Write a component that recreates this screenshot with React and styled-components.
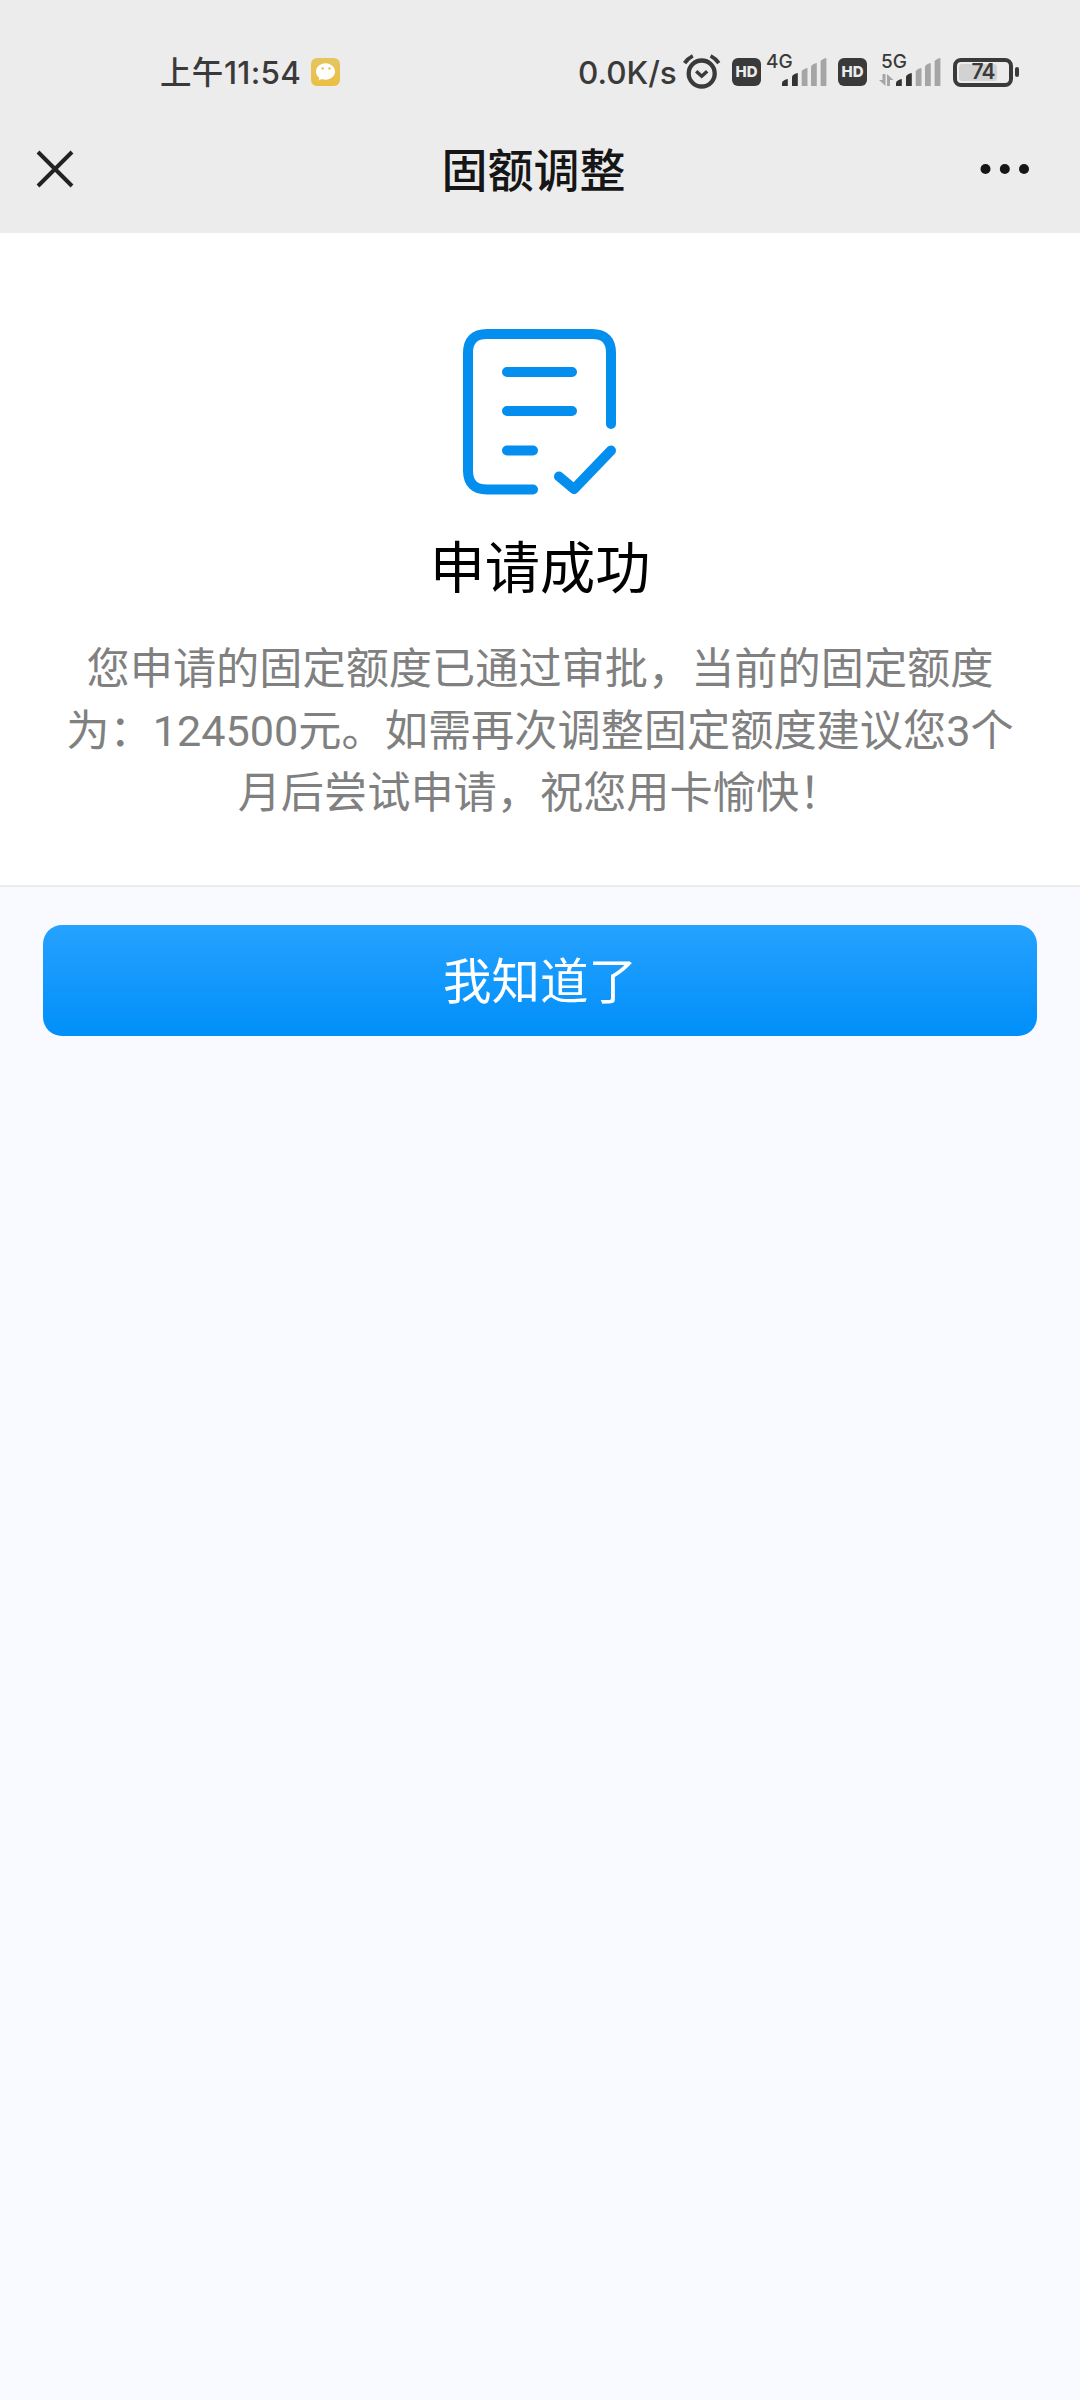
import React from 'react'
import styled, { createGlobalStyle } from 'styled-components'

const App = () => {
    return (
        <Page>
            <GlobalStyle />
            <StatusBar>
                <Time><span>上午</span>11:54</Time>
                <ChatIcon />
                <StatusIcons>
                    <Speed>0.0K/s</Speed>
                    <AlarmIcon />
                    <HdBadge>HD</HdBadge>
                    <Signal label="4G" />
                    <HdBadge>HD</HdBadge>
                    <Signal label="5G" wide />
                    <Battery>
                        <BatteryBody>
                            <BatteryLevel style={{ width: `${(74 / 100) * 52}px` }} />
                            <BatteryText>74</BatteryText>
                        </BatteryBody>
                        <BatteryTip />
                    </Battery>
                </StatusIcons>
            </StatusBar>
            <NavBar>
                <NavButton aria-label="关闭">
                    <svg width="40" height="40" viewBox="0 0 40 40">
                        <path d="M3 3L37 37M37 3L3 37" stroke="#222" strokeWidth="4" />
                    </svg>
                </NavButton>
                <NavTitle>固额调整</NavTitle>
                <NavButton aria-label="更多">
                    <svg width="50" height="12" viewBox="0 0 50 12">
                        <circle cx="5.5" cy="6" r="5" fill="#161616" />
                        <circle cx="24.8" cy="6" r="5" fill="#161616" />
                        <circle cx="44" cy="6" r="5" fill="#161616" />
                    </svg>
                </NavButton>
            </NavBar>
            <Result>
                <ResultIcon />
                <ResultTitle>申请成功</ResultTitle>
                <Description>
                    您申请的固定额度已通过审批，当前的固定额度
                    <br />
                    为：124500元。如需再次调整固定额度建议您3个
                    <br />
                    月后尝试申请，祝您用卡愉快！
                </Description>
            </Result>
            <Footer>
                <ConfirmButton>我知道了</ConfirmButton>
            </Footer>
        </Page>
    )
}
export default App

const ChatIcon = () => (
    <svg width="30" height="30" viewBox="0 0 30 30">
        <defs>
            <linearGradient id="chat" x1="0" y1="0" x2="0" y2="1">
                <stop offset="0" stopColor="#e6c560" />
                <stop offset="1" stopColor="#ebbf45" />
            </linearGradient>
        </defs>
        <rect x="0" y="1" width="29" height="28" rx="6" fill="url(#chat)" />
        <path d="M14.500 6.200c-5.400 0-9.500 3.700-9.500 8.400 0 2.700 1.300 4.800 3.300 6.300l-.6 2.500 3-1.300c1.200.4 2.500.6 3.800.6 5.300 0 9.500-3.600 9.500-8.100 0-4.700-4.200-8.400-9.500-8.400z" fill="#fff" />
        <circle cx="11.700" cy="11.400" r="1.200" fill="#e0bd58" />
        <circle cx="18.500" cy="11.400" r="1.200" fill="#e0bd58" />
    </svg>
)

const AlarmIcon = () => (
    <AlarmSvg width="38" height="36" viewBox="0 0 38 36" fill="none" stroke="#3a3a3a">
        <circle cx="18.700" cy="19.500" r="13" strokeWidth="4.300" />
        <path d="M13.200 17.200l5.500 5 5.500-5" strokeWidth="3.500" />
        <path d="M1.600 9.200Q5 4.300 9.800 1.900M27.600 1.900Q32.400 4.300 35.800 9.200" strokeWidth="3.800" />
    </AlarmSvg>
)

const bars = [
    { x: 0, top: 21, color: '#333' },
    { x: 10, top: 15, color: '#333' },
    { x: 19.7, top: 10, color: '#a5a5a5' },
    { x: 29, top: 5, color: '#a5a5a5' },
    { x: 38.6, top: 0, color: '#a5a5a5' },
]

const Signal = ({ label, wide }) => (
    <SignalBox $wide={wide}>
        <SignalLabel $wide={wide}>{label}</SignalLabel>
        {wide && (
            <svg width="15" height="12" viewBox="0 0 15 12" fill="#a5a5a5">
                <path d="M3.500 0h3v12L0 6h3.500zM8 12V0l6.500 6H11v6z" />
            </svg>
        )}
        <svg width="45" height="28" viewBox="0 0 45 28">
            {bars.map(({ x, top, color }) => (
                <path key={x} d={`M${x} 28V${top + 3.5}Q${x + 1.5} ${top + 0.5} ${x + 5.8} ${top}V28z`} fill={color} />
            ))}
        </svg>
    </SignalBox>
)

const ResultIcon = () => (
    <svg width="160" height="176" viewBox="0 0 160 176" fill="none" stroke="#048fee" strokeWidth="10" strokeLinecap="round" strokeLinejoin="round">
        <path d="M151 99V28Q151 9 132 9H27Q8 9 8 28V145.500Q8 164.500 27 164.500H73" />
        <path d="M47 47H112M47 86H112M47 125.500H73" />
        <path d="M99 151.500L114 164L151 125.500" />
    </svg>
)

const GlobalStyle = createGlobalStyle`
    body {
        margin: 0;
        background: #f9faff;
    }
    * {
        box-sizing: border-box;
    }
    svg {
        display: block;
        flex: none;
    }
`;

const Page = styled.div`
    width: 1080px;
    min-height: 2400px;
    background: #f9faff;
    font-family: Roboto, "Noto Sans CJK SC", sans-serif;
`;

const StatusBar = styled.header`
    display: flex;
    align-items: center;
    height: 104px;
    padding: 40px 61px 0 160px;
    background: #ececec;
    color: #3a3a3a;
    font-family: Inter, "Noto Sans CJK SC", sans-serif;
`;

const Time = styled.div`
    display: flex;
    align-items: center;
    width: 151px;
    padding-top: 2px;
    font-size: 31.5px;
    line-height: 40px;
    font-weight: 500;
    letter-spacing: 0.3px;
    white-space: nowrap;

    span {
        width: 64px;
    }
`;

const StatusIcons = styled.div`
    display: flex;
    align-items: center;
    margin-left: auto;
`;

const Speed = styled.div`
    width: 105px;
    padding-top: 2px;
    font-size: 31.5px;
    line-height: 40px;
    font-weight: 500;
    white-space: nowrap;
`;

const AlarmSvg = styled.svg`
    margin-right: 11px;
`;

const HdBadge = styled.div`
    display: flex;
    align-items: center;
    justify-content: center;
    width: 29px;
    height: 28px;
    border-radius: 6px;
    background: #3a3a3a;
    color: #ececec;
    font-size: 15px;
    font-weight: 800;
    line-height: 28px;
`;

const SignalBox = styled.div`
    position: relative;
    display: flex;
    align-items: flex-end;
    gap: 2px;
    padding-left: ${props => props.$wide ? '12px' : '21px'};
    margin-right: ${props => props.$wide ? '12px' : '11px'};
`;

const SignalLabel = styled.span`
    position: absolute;
    top: -7px;
    left: ${props => props.$wide ? '14px' : '5px'};
    font-size: 19px;
    line-height: 22px;
    font-weight: 500;
`;

const Battery = styled.div`
    display: flex;
    align-items: center;
    gap: 2px;
`;

const BatteryBody = styled.div`
    position: relative;
    display: flex;
    align-items: center;
    justify-content: center;
    width: 60px;
    height: 29px;
    border: 4px solid #3a3a3a;
    border-radius: 8px;
`;

const BatteryLevel = styled.div`
    position: absolute;
    left: 2px;
    top: 2px;
    bottom: 2px;
    border-radius: 3px;
    background: #d2d2d2;
`;

const BatteryText = styled.span`
    position: relative;
    font-size: 21px;
    line-height: 22px;
    font-weight: 600;
    letter-spacing: -1px;
`;

const BatteryTip = styled.div`
    width: 4px;
    height: 10px;
    border-radius: 2px;
    background: #3a3a3a;
`;

const NavBar = styled.nav`
    display: grid;
    grid-template-columns: 40px 1fr 50px;
    align-items: center;
    height: 129px;
    padding: 0 50px 0 35px;
    background: #ececec;
`;

const NavButton = styled.button`
    padding: 0;
    border: 0;
    background: none;
`;

const NavTitle = styled.h1`
    margin: 0;
    padding: 4px 0 0 12px;
    font-size: 46px;
    line-height: 60px;
    font-weight: 500;
    text-align: center;
    color: #161616;
`;

const Result = styled.main`
    display: flex;
    flex-direction: column;
    align-items: center;
    height: 654px;
    padding-top: 92px;
    border-bottom: 2px solid #ebecee;
    background: #fff;
`;

const ResultTitle = styled.h2`
    margin: 28px 0 0;
    font-size: 55.2px;
    line-height: 80px;
    font-weight: 400;
    color: #000;
`;

const Description = styled.p`
    margin: 30px 0 0;
    font-size: 43.2px;
    line-height: 62px;
    text-align: center;
    white-space: nowrap;
    color: #808080;
`;

const Footer = styled.div`
    padding: 38px 43px;
`;

const ConfirmButton = styled.button`
    display: block;
    width: 100%;
    height: 111px;
    padding: 5px 0 0;
    border: 0;
    border-radius: 19px;
    background: linear-gradient(#26a2ff, #008ff9);
    color: #fff;
    font-family: inherit;
    font-size: 48.5px;
    line-height: 106px;
`;
